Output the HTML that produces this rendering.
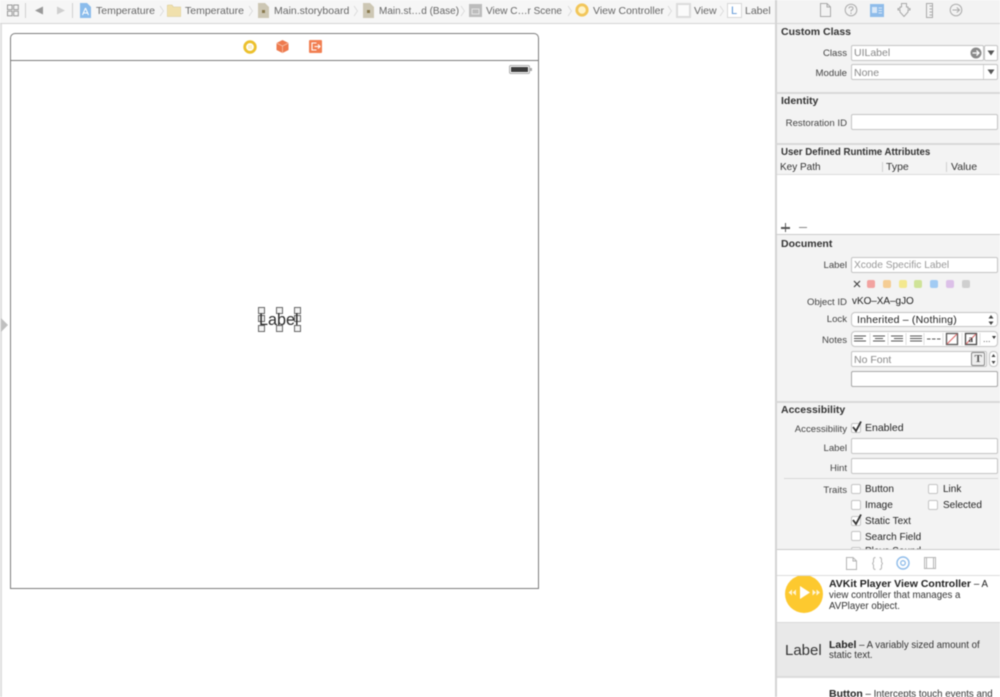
<!DOCTYPE html>
<html><head><meta charset="utf-8">
<style>
html,body{margin:0;padding:0;background:#fff}
#p{position:relative;width:1000px;height:697px;overflow:hidden;background:#fff;font-family:"Liberation Sans",sans-serif;font-size:10.5px;color:#333;filter:blur(.5px)}
#p div,#p span.t,#p svg{position:absolute}
.t{white-space:nowrap;line-height:12px}
.g{color:#666}
.r{text-align:right;width:70px;left:777px;color:#444;font-size:9.6px;margin-top:1px}
.b{font-weight:bold;color:#333;left:781px}
.f{background:#fff;border:1px solid #c4c4c4;box-sizing:border-box;border-radius:2px}
.sec{left:776px;width:224px;height:2px;background:#d8d8d8}
.sw{width:8px;height:8px;border-radius:2px;top:280px}
.cb{width:10px;height:10px;border:1px solid #c4c4c4;border-radius:2px;background:#fff;box-sizing:border-box}
.h{width:7px;height:7px;border:1px solid #666;background:#f4f4f4;box-sizing:border-box}
.tr{font-size:10px;color:#222}
.d{font-size:9.7px;color:#333}
</style></head><body><div id="p">

<!-- toolbar -->
<div style="left:0;top:0;width:776px;height:23px;background:#f6f6f6"></div>
<div style="left:0;top:23px;width:776px;height:1px;background:#d4d4d4"></div>
<svg style="left:7px;top:4px" width="12" height="13" viewBox="0 0 12 13" fill="#f4f4f4" stroke="#999" stroke-width="1"><rect x=".5" y="1" width="4.6" height="4.6"/><rect x="6.7" y="1" width="4.6" height="4.6"/><rect x=".5" y="7.2" width="4.6" height="4.6"/><rect x="6.7" y="7.2" width="4.6" height="4.6"/></svg>
<div style="left:25px;top:3px;width:1px;height:15px;background:#d0d0d0"></div>
<svg style="left:34px;top:6px" width="10" height="10"><path d="M9 0.5V8.5L1 4.5Z" fill="#999"/></svg>
<svg style="left:56px;top:6px" width="10" height="10"><path d="M1 0.5V8.500L9 4.500Z" fill="#cfcfcf"/></svg>
<div style="left:72px;top:3px;width:1px;height:15px;background:#d0d0d0"></div>

<svg style="left:80px;top:3px" width="11" height="15"><path d="M0 0H7L11 4V15H0Z" fill="#8bbcec"/><path d="M5.5 5L2.5 12M5.5 5L8.5 12M3.5 10H7.5" stroke="#fff" stroke-width="1" fill="none"/></svg>
<span class="t g" style="left:96px;top:5px">Temperature</span>
<svg style="left:159px;top:5px" width="6" height="12"><path d="M1 1L4.500 6L1 11" fill="none" stroke="#d8d8d8" stroke-width=".8"/></svg>
<svg style="left:167px;top:4px" width="14" height="13"><path d="M0 2.5Q0 1 1.500 1H5L6.500 3H14V12.500H0Z" fill="#f0e0ac" stroke="#d6c898" stroke-width=".6"/></svg>
<span class="t g" style="left:185px;top:5px">Temperature</span>
<svg style="left:248px;top:5px" width="6" height="12"><path d="M1 1L4.500 6L1 11" fill="none" stroke="#d8d8d8" stroke-width=".8"/></svg>
<svg style="left:258px;top:3px" width="11" height="15"><path d="M0 0H7L11 4V15H0Z" fill="#cdc7b4"/><rect x="4" y="7" width="3" height="3" fill="#8a7b50"/></svg>
<span class="t g" style="left:274px;top:5px">Main.storyboard</span>
<svg style="left:353px;top:5px" width="6" height="12"><path d="M1 1L4.500 6L1 11" fill="none" stroke="#d8d8d8" stroke-width=".8"/></svg>
<svg style="left:363px;top:3px" width="11" height="15"><path d="M0 0H7L11 4V15H0Z" fill="#cdc7b4"/><rect x="4" y="7" width="3" height="3" fill="#8a7b50"/></svg>
<span class="t g" style="left:379px;top:6px;font-size:10px">Main.st…d (Base)</span>
<svg style="left:460px;top:5px" width="6" height="12"><path d="M1 1L4.500 6L1 11" fill="none" stroke="#d8d8d8" stroke-width=".8"/></svg>
<svg style="left:469px;top:4px" width="13" height="13"><rect width="13" height="13" fill="#bcbcbc"/><rect x="3" y="5" width="7" height="5" fill="none" stroke="#e4e4e4"/></svg>
<span class="t g" style="left:486px;top:6px;font-size:10px">View C…r Scene</span>
<svg style="left:567px;top:5px" width="6" height="12"><path d="M1 1L4.500 6L1 11" fill="none" stroke="#d8d8d8" stroke-width=".8"/></svg>
<svg style="left:575px;top:3px" width="14" height="14"><circle cx="7" cy="7" r="5.200" fill="#fff3c8" stroke="#f2c65a" stroke-width="2.800"/></svg>
<span class="t g" style="left:593px;top:5px">View Controller</span>
<svg style="left:667px;top:5px" width="6" height="12"><path d="M1 1L4.500 6L1 11" fill="none" stroke="#d8d8d8" stroke-width=".8"/></svg>
<div style="left:676px;top:3px;width:15px;height:15px;box-sizing:border-box;border:2px solid #dcdcdc;background:#fbfbfb"></div>
<span class="t g" style="left:694px;top:5px">View</span>
<svg style="left:719px;top:5px" width="6" height="12"><path d="M1 1L4.500 6L1 11" fill="none" stroke="#d8d8d8" stroke-width=".8"/></svg>
<div style="left:727px;top:3px;width:15px;height:15px;box-sizing:border-box;border:1px solid #d8d8d8;background:#fff"></div>
<span class="t" style="left:731px;top:5px;color:#5f97d6;font-size:11px">L</span>
<span class="t g" style="left:745px;top:5px">Label</span>

<!-- left edge -->
<div style="left:0;top:24px;width:2px;height:673px;background:#e0e0e0"></div>
<svg style="left:0;top:317px" width="9" height="16"><path d="M1 1L8 8L1 15Z" fill="#c0c0c0"/></svg>

<!-- canvas scene -->
<div style="left:10px;top:33px;width:529px;height:556px;box-sizing:border-box;border:1px solid #7c7c7c;border-radius:5px 5px 0 0;background:#fff"></div>
<div style="left:10px;top:60px;width:529px;height:1px;background:#7c7c7c"></div>
<svg style="left:243px;top:40px" width="14" height="14"><circle cx="7" cy="7" r="5.300" fill="#fff" stroke="#ecc02c" stroke-width="2.800"/><rect x="5" y="5" width="4" height="4" fill="#fbf0c8"/></svg>
<svg style="left:276px;top:40px" width="13" height="13"><path d="M6.500 0L12.500 3V10L6.500 13L.5 10V3Z" fill="#ee7a4e"/><path d="M.5 3L6.500 6V13M6.500 6L12.500 3" stroke="#f8c8b0" stroke-width=".7" fill="none"/></svg>
<svg style="left:309px;top:40px" width="13" height="13"><rect width="13" height="13" rx="1" fill="#f27f52"/><path d="M7.500 3H3V10H7.500M5.500 6.500H10.500M9 4.500L11 6.500L9 8.500" stroke="#fff" stroke-width="1.100" fill="none"/></svg>
<!-- battery -->
<div style="left:509px;top:65px;width:21px;height:9px;box-sizing:border-box;border:1px solid #aaa;border-radius:2px;background:#fff"></div>
<div style="left:511px;top:67px;width:17px;height:5px;background:#3c3c3c"></div>
<div style="left:530px;top:68px;width:2px;height:3px;background:#aaa"></div>

<!-- label -->
<div class="h" style="left:258px;top:307px"></div><div class="h" style="left:276px;top:307px"></div><div class="h" style="left:294px;top:307px"></div>
<div class="h" style="left:258px;top:315px"></div><div class="h" style="left:294px;top:315px"></div>
<div class="h" style="left:258px;top:325px"></div><div class="h" style="left:276px;top:325px"></div><div class="h" style="left:294px;top:325px"></div>
<span class="t" style="left:259px;top:311px;font-size:16.200px;line-height:18px;color:#2a2a2a">Label</span>

<!-- inspector -->
<div style="left:776px;top:0;width:224px;height:550px;background:#f3f3f3"></div>
<div style="left:775px;top:0;width:2px;height:697px;background:#d4d4d4"></div>
<div style="left:776px;top:23px;width:224px;height:1px;background:#d4d4d4"></div>
<svg style="left:819px;top:3px" width="13" height="14" fill="none" stroke="#aaa"><path d="M1.500 .5H8L11.500 4V13.500H1.500ZM8 .5V4H11.500"/></svg>
<svg style="left:844px;top:3px" width="14" height="14" fill="none" stroke="#aaa"><circle cx="7" cy="7" r="5.800"/><path d="M5 5.500Q5 3.800 7 3.800T9 5.500Q9 6.500 7 7.500V8.500M7 9.500V11"/></svg>
<svg style="left:870px;top:4px" width="14" height="13"><rect width="14" height="13" fill="#8fbcea"/><rect x="2" y="3" width="5" height="6" fill="#d8e8f8"/><path d="M8.500 4H12M8.500 6.500H12M8.500 9H12" stroke="#d8e8f8"/></svg>
<svg style="left:897px;top:3px" width="14" height="14" fill="none" stroke="#aaa"><path d="M4.500 .5H9.500V4H11V5.500H13V7H11V9L7 13.500L3 9V7H1V5.500H3V4H4.500Z"/></svg>
<svg style="left:925px;top:3px" width="9" height="15" fill="none" stroke="#aaa"><rect x="1.500" y=".5" width="6" height="14"/><path d="M4.500 3H7.500M4.500 6H7.500M4.500 9H7.500M4.500 12H7.500"/></svg>
<svg style="left:949px;top:3px" width="14" height="14" fill="none" stroke="#aaa"><circle cx="7" cy="7" r="5.800"/><path d="M3.500 7H10M7.800 4.500L10.500 7L7.800 9.500"/></svg>

<span class="t b" style="top:26px">Custom Class</span>
<span class="t r" style="top:47px">Class</span>
<div class="f" style="left:851px;top:45px;width:133px;height:16px"></div>
<span class="t" style="left:854px;top:47px;color:#888">UILabel</span>
<svg style="left:970px;top:47px" width="12" height="12"><circle cx="6" cy="6" r="5.500" fill="#8a8a8a"/><path d="M2.500 6H8.500M6.500 3.500L9 6L6.500 8.500" stroke="#fff" stroke-width="1.300" fill="none"/></svg>
<div class="f" style="left:984px;top:45px;width:14px;height:16px"></div>
<svg style="left:987px;top:50px" width="8" height="6"><path d="M0.500 0.500H7.500L4 5.500Z" fill="#555"/></svg>
<span class="t r" style="top:67px">Module</span>
<div class="f" style="left:851px;top:64px;width:147px;height:16px"></div>
<span class="t" style="left:854px;top:67px;color:#888">None</span>
<div style="left:983px;top:65px;width:1px;height:14px;background:#d4d4d4"></div>
<svg style="left:987px;top:69px" width="8" height="6"><path d="M0.500 0.500H7.500L4 5.500Z" fill="#555"/></svg>

<div class="sec" style="top:92px"></div>
<span class="t b" style="top:95px">Identity</span>
<span class="t r" style="top:117px">Restoration ID</span>
<div class="f" style="left:851px;top:114px;width:147px;height:16px"></div>

<div class="sec" style="top:143px"></div>
<span class="t b" style="top:147px;font-size:9.700px">User Defined Runtime Attributes</span>
<div style="left:777px;top:160px;width:223px;height:14px;background:#f4f4f4;border-bottom:1px solid #dcdcdc"></div>
<span class="t" style="left:780px;top:162px;font-size:10px">Key Path</span>
<div style="left:882px;top:162px;width:1px;height:10px;background:#d0d0d0"></div>
<span class="t" style="left:886px;top:161px">Type</span>
<div style="left:946px;top:162px;width:1px;height:10px;background:#d0d0d0"></div>
<span class="t" style="left:951px;top:161px">Value</span>
<div style="left:777px;top:175px;width:223px;height:60px;background:#fff"></div>
<div style="left:781px;top:227px;width:9px;height:1.500px;background:#555"></div>
<div style="left:784.800px;top:223px;width:1.500px;height:9px;background:#555"></div>
<div style="left:799px;top:227px;width:8px;height:1px;background:#888"></div>
<div class="sec" style="top:234px;height:1px;background:#ccc"></div>

<span class="t b" style="top:238px">Document</span>
<span class="t r" style="top:259px">Label</span>
<div class="f" style="left:851px;top:257px;width:147px;height:16px"></div>
<span class="t" style="left:854px;top:260px;color:#999;font-size:10.200px">Xcode Specific Label</span>
<svg style="left:853px;top:280px" width="8" height="8"><path d="M1 1L7 7M7 1L1 7" stroke="#444" stroke-width="1.200"/></svg>
<div class="sw" style="left:867px;background:#f2a3a0"></div>
<div class="sw" style="left:883px;background:#f5cd94"></div>
<div class="sw" style="left:899px;background:#f3e88e"></div>
<div class="sw" style="left:914px;background:#cfe398"></div>
<div class="sw" style="left:930px;background:#a2cbf3"></div>
<div class="sw" style="left:946px;background:#dcc0e8"></div>
<div class="sw" style="left:962px;background:#cfcfcf"></div>
<span class="t r" style="top:296px">Object ID</span>
<span class="t" style="left:852px;top:296px;color:#222;font-size:10px;letter-spacing:-.05px">vKO–XA–gJO</span>
<span class="t r" style="top:313px">Lock</span>
<div class="f" style="left:851px;top:312px;width:147px;height:15px;border-radius:4px"></div>
<span class="t" style="left:857px;top:314px;color:#222;letter-spacing:.2px">Inherited – (Nothing)</span>
<svg style="left:988px;top:315px" width="6" height="10"><path d="M3 0L5.500 3.500H.5ZM3 10L.5 6.500H5.500Z" fill="#444"/></svg>
<span class="t r" style="top:334px">Notes</span>
<div class="f" style="left:851px;top:331px;width:147px;height:16px;border-radius:4px"></div>
<svg style="left:852px;top:332px" width="146" height="14">
<g stroke="#555" stroke-width="1" fill="none">
<path d="M2 4H14M2 6.500H11M2 9H14"/><path d="M21 4H33M23 6.500H31M21 9H33"/><path d="M39 4H51M42 6.500H51M39 9H51"/><path d="M58 4H70M58 6.500H70M58 9H70"/>
<path d="M75 7H89" stroke-dasharray="3.500 1.500"/>
<rect x="94.500" y="1.500" width="11" height="11" stroke="#555" stroke-width="1.300"/>
<rect x="113.500" y="1.500" width="11" height="11" stroke="#444" stroke-width="1.300"/>
<path d="M95 12L105 2M114 12L124 2" stroke="#d66"/>
</g>
<path d="M18 1V13M36 1V13M54 1V13M72 1V13M91 1V13M110 1V13M128 1V13" stroke="#ddd"/>
<text x="116.500" y="10" font-size="9" font-family="Liberation Serif" font-weight="bold" fill="#333">a</text>
<text x="131" y="10" font-size="9" fill="#555">...</text>
<path d="M140 4H144L142 7Z" fill="#333"/>
</svg>
<div class="f" style="left:851px;top:351px;width:136px;height:16px"></div>
<span class="t" style="left:854px;top:354px;color:#888">No Font</span>
<div style="left:971px;top:352px;width:14px;height:14px;box-sizing:border-box;border:1.500px solid #8a8a8a;border-radius:2px;background:#eee"></div>
<span class="t" style="left:974.500px;top:353px;font:bold 11px/12px 'Liberation Serif',serif;color:#555">T</span>
<div class="f" style="left:989px;top:351px;width:9px;height:16px;border-radius:4px"></div>
<svg style="left:991px;top:354px" width="5" height="10"><path d="M2.500 0L4.500 3H.5ZM2.500 10L.5 7H4.500Z" fill="#444"/></svg>
<div class="f" style="left:851px;top:371px;width:147px;height:16px;border-color:#a8a8a8"></div>

<div class="sec" style="top:401px"></div>
<span class="t b" style="top:404px">Accessibility</span>
<span class="t r" style="top:423px">Accessibility</span>
<div class="cb" style="left:851px;top:423px"></div>
<svg style="left:851px;top:420px" width="12" height="13"><path d="M2 7L5 11L10 1.500" stroke="#333" stroke-width="1.800" fill="none"/></svg>
<span class="t" style="left:865px;top:422px;color:#222">Enabled</span>
<span class="t r" style="top:442px">Label</span>
<div class="f" style="left:851px;top:438px;width:147px;height:16px"></div>
<span class="t r" style="top:462px">Hint</span>
<div class="f" style="left:851px;top:458px;width:147px;height:16px"></div>
<div style="left:784px;top:478px;width:214px;height:1px;background:#d8d8d8"></div>
<span class="t r" style="top:484px">Traits</span>
<div class="cb" style="left:851px;top:484px"></div><span class="t tr" style="left:865px;top:484px">Button</span>
<div class="cb" style="left:928px;top:484px"></div><span class="t tr" style="left:943px;top:484px">Link</span>
<div class="cb" style="left:851px;top:500px"></div><span class="t tr" style="left:865px;top:500px">Image</span>
<div class="cb" style="left:928px;top:500px"></div><span class="t tr" style="left:943px;top:500px">Selected</span>
<div class="cb" style="left:851px;top:516px"></div>
<svg style="left:851px;top:513px" width="12" height="13"><path d="M2 7L5 11L10 1.500" stroke="#333" stroke-width="1.800" fill="none"/></svg>
<span class="t tr" style="left:865px;top:516px">Static Text</span>
<div class="cb" style="left:851px;top:531px"></div><span class="t tr" style="left:865px;top:532px">Search Field</span>
<div class="cb" style="left:851px;top:547px"></div><span class="t tr" style="left:865px;top:546px">Plays Sound</span>

<!-- library -->
<div style="left:777px;top:549px;width:223px;height:148px;background:#fff;border-top:1px solid #ccc"></div>
<svg style="left:846px;top:557px" width="11" height="13" fill="none" stroke="#b4b4b4"><path d="M.5 .5H7L10.500 4V12.500H.5ZM7 .5V4H10.500"/></svg>
<svg style="left:872px;top:557px" width="11" height="13" fill="none" stroke="#b4b4b4"><path d="M3.500 .5Q1.500 .5 1.500 2.500V5L.5 6.500L1.500 8V10.500Q1.500 12.500 3.500 12.500M7.500 .5Q9.500 .5 9.500 2.500V5L10.500 6.500L9.500 8V10.500Q9.500 12.500 7.500 12.500"/></svg>
<svg style="left:896px;top:556px" width="14" height="14" fill="none" stroke="#8fbcea"><circle cx="7" cy="7" r="6" stroke-width="1.400"/><circle cx="7" cy="7" r="2.300" stroke-width="1.300"/></svg>
<svg style="left:924px;top:557px" width="12" height="12" fill="none" stroke="#b4b4b4"><rect x=".5" y=".5" width="11" height="11"/><path d="M2.500 1V11M9.500 1V11"/></svg>
<div style="left:777px;top:575px;width:223px;height:1px;background:#dcdcdc"></div>

<div style="left:777px;top:576px;width:223px;height:47px;overflow:hidden">
<svg style="left:8px;top:-1px" width="38" height="39"><circle cx="19" cy="19" r="19" fill="#fdc92f"/><path d="M15 11L25 17.500L15 24Z" fill="#fff"/><path d="M11 14.500V20.500L7.500 17.500ZM7 14.500V20.500L3.500 17.500ZM27.500 14.500V20.500L31 17.500ZM31.500 14.500V20.500L35 17.500Z" fill="#fff" opacity=".8"/></svg>
</div>
<span class="t" style="left:829px;top:578px;color:#222"><b>AVKit Player View Controller</b> <span style="font-size:9.700px">– A</span></span>
<span class="t d" style="left:829px;top:590px">view controller that manages a</span>
<span class="t d" style="left:829px;top:601px">AVPlayer object.</span>

<div style="left:777px;top:622px;width:223px;height:56px;box-sizing:border-box;background:#e9e9e9;border-top:1px solid #d8d8d8;border-bottom:2px solid #dcdcdc"></div>
<span class="t" style="left:785px;top:642px;font-size:15px;line-height:18px;color:#333">Label</span>
<span class="t d" style="left:829px;top:639px"><b style="color:#222;font-size:10.500px">Label</b> – A variably sized amount of</span>
<span class="t d" style="left:829px;top:650px">static text.</span>
<span class="t d" style="left:829px;top:688px"><b style="color:#222;font-size:10.500px">Button</b> – Intercepts touch events and</span>

</div></body></html>
